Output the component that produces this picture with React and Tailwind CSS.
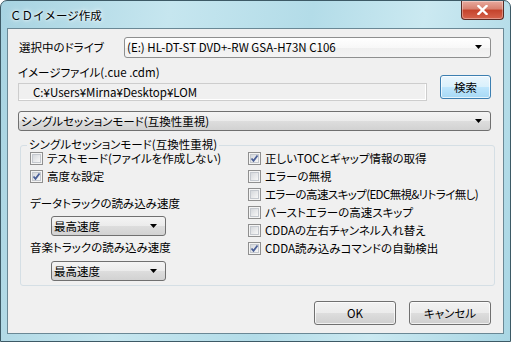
import React from "react";

const font = "font-['Noto_Sans_CJK_JP','Noto_Sans',sans-serif] [font-feature-settings:'palt']";

function Arrow() {
  return (
    <svg width="7" height="4" viewBox="0 0 7 4" className="shrink-0">
      <polygon points="0,0 7,0 3.5,4" fill="#000" />
    </svg>
  );
}

function Combo({ text, className = "", light = false }) {
  return (
    <div
      className={`flex items-center justify-between rounded-[3px] border pl-[2px] pr-[8px] text-[11.5px] leading-[14px] ${
        light
          ? "border-[#8e8f8f] bg-[linear-gradient(#ffffff,#f8f8f8_50%,#efefef_51%,#f4f4f4)]"
          : "border-[#707070] bg-[linear-gradient(#f4f4f4,#ebebeb_50%,#dddddd_51%,#d2d2d2)]"
      } ${className}`}
    >
      <span className="whitespace-nowrap">{text}</span>
      <Arrow />
    </div>
  );
}

function Check({ checked }) {
  return (
    <div className="relative h-[13px] w-[13px] shrink-0 border border-[#8f8f8f] bg-[#f4f4f4] p-[1px]">
      <div className="h-full w-full border border-[#c4c8ce] bg-[linear-gradient(135deg,#d5d8dc,#f7f7f7)]" />
      {checked && (
        <svg width="11" height="11" viewBox="0 0 11 11" className="absolute left-0 top-0">
          <path d="M2.5 5.5 L4.5 7.8 L8.5 2.5" fill="none" stroke="#4a5f97" strokeWidth="1.8" />
        </svg>
      )}
    </div>
  );
}

function CheckRow({ checked, label, tight = false }) {
  return (
    <div className="flex h-[18px] items-center gap-[4px]">
      <Check checked={checked} />
      <span className={`whitespace-nowrap text-[11.5px] leading-[14px] ${tight ? "tracking-[-0.6px]" : ""}`}>{label}</span>
    </div>
  );
}

function Button({ children, className = "", primary = false }) {
  return (
    <div
      className={`flex items-center justify-center rounded-[3px] border text-[11.5px] leading-[14px] ${
        primary
          ? "border-[#3c7fb1] bg-[linear-gradient(#eaf6fd,#d9f0fc_50%,#bee6fd_51%,#a7d9f5)]"
          : "border-[#707070] bg-[linear-gradient(#f2f2f2,#ebebeb_50%,#dddddd_51%,#cfcfcf)]"
      } shadow-[inset_0_0_0_1px_rgba(255,255,255,0.7)] ${className}`}
    >
      {children}
    </div>
  );
}

export default function App() {
  return (
    <div className={`h-[342px] w-[511px] ${font} text-black`}>
      <div className="relative flex h-[342px] w-[511px] flex-col rounded-t-[7px] border border-[#3d5a66] bg-[linear-gradient(100deg,#a7d3e1,#c6e6ef_30%,#b3dce8_55%,#cbe9f1_75%,#a9d6e4)] px-[6px] pb-[7px]">
        {/* title bar */}
        <div className="flex h-[27px] items-center justify-between pl-[3px]">
          <span className="text-[11.5px] leading-[14px] [font-feature-settings:normal] [text-shadow:0_0_6px_#ffffff,0_0_3px_#ffffff]">
            ＣＤイメージ作成
          </span>
          <div className="flex h-[19px] w-[43px] items-center justify-center self-start rounded-b-[4px] border border-t-0 border-[#5a2b24] bg-[linear-gradient(#e8aa9e,#d7806f_45%,#c4432b_50%,#d6634c)] shadow-[inset_0_0_0_1px_rgba(255,255,255,0.35)]">
            <svg width="11" height="10" viewBox="0 0 11 10">
              <path d="M1.5 1 L9.5 9 M9.5 1 L1.5 9" stroke="#fff" strokeWidth="2.4" strokeLinecap="square" />
            </svg>
          </div>
        </div>
        {/* client area */}
        <div className="flex flex-1 flex-col border border-[#6a8895] bg-[#f0f0f0] pl-[10px] pr-[11px]">
          {/* drive */}
          <div className="mt-[8px] flex h-[20px] items-center">
            <span className="ml-[1px] w-[105px] text-[11.5px] leading-[14px]">選択中のドライブ</span>
            <Combo light text="(E:) HL-DT-ST DVD+-RW GSA-H73N C106" className="h-[21px] w-[367px]" />
          </div>
          {/* image file */}
          <div className="mt-[8px] flex">
            <div className="flex w-[409px] flex-col">
              <span className="h-[14px] text-[11.5px] leading-[14px]">イメージファイル(.cue .cdm)</span>
              <div className="mt-[4px] flex h-[18px] items-center border border-[#cdcdcd] bg-[#f0f0f0] pl-[14px] text-[11.5px] leading-[14px] shadow-[inset_-1px_-1px_0_#ffffff]">
                C:¥Users¥Mirna¥Desktop¥LOM
              </div>
            </div>
            <Button primary className="ml-[13px] mt-[10px] h-[24px] w-[51px]">
              検索
            </Button>
          </div>
          {/* mode */}
          <Combo text="シングルセッションモード(互換性重視)" className="mt-[10px] h-[20px] w-[473px]" />
          {/* group */}
          <div className="relative ml-[2px] mt-[14px] flex h-[141px] w-[475px] rounded-[3px] border border-[#d5dfe5] pl-[9px] pt-[3px]">
            <span className="absolute -top-[9px] left-[6px] bg-[#f0f0f0] px-[2px] text-[11.5px] leading-[14px]">
              シングルセッションモード(互換性重視)
            </span>
            <div className="flex w-[218px] shrink-0 flex-col">
              <CheckRow label="テストモード(ファイルを作成しない)" />
              <CheckRow checked label="高度な設定" />
              <span className="mt-[11px] h-[14px] text-[11.5px] leading-[14px]">データトラックの読み込み速度</span>
              <Combo text="最高速度" className="ml-[21px] mt-[6px] h-[20px] w-[115px]" />
              <span className="mt-[4px] h-[14px] text-[11.5px] leading-[14px]">音楽トラックの読み込み速度</span>
              <Combo text="最高速度" className="ml-[21px] mt-[7px] h-[20px] w-[115px]" />
            </div>
            <div className="flex flex-col">
              <CheckRow checked label="正しいTOCとギャップ情報の取得" />
              <CheckRow label="エラーの無視" />
              <CheckRow tight label="エラーの高速スキップ(EDC無視&リトライ無し)" />
              <CheckRow label="バーストエラーの高速スキップ" />
              <CheckRow label="CDDAの左右チャンネル入れ替え" />
              <CheckRow checked label="CDDA読み込みコマンドの自動検出" />
            </div>
          </div>
          {/* buttons */}
          <div className="mt-[15px] flex justify-end gap-[13px] pr-[1px]">
            <Button className="h-[24px] w-[82px]">OK</Button>
            <Button className="h-[24px] w-[82px]">キャンセル</Button>
          </div>
        </div>
      </div>
    </div>
  );
}
